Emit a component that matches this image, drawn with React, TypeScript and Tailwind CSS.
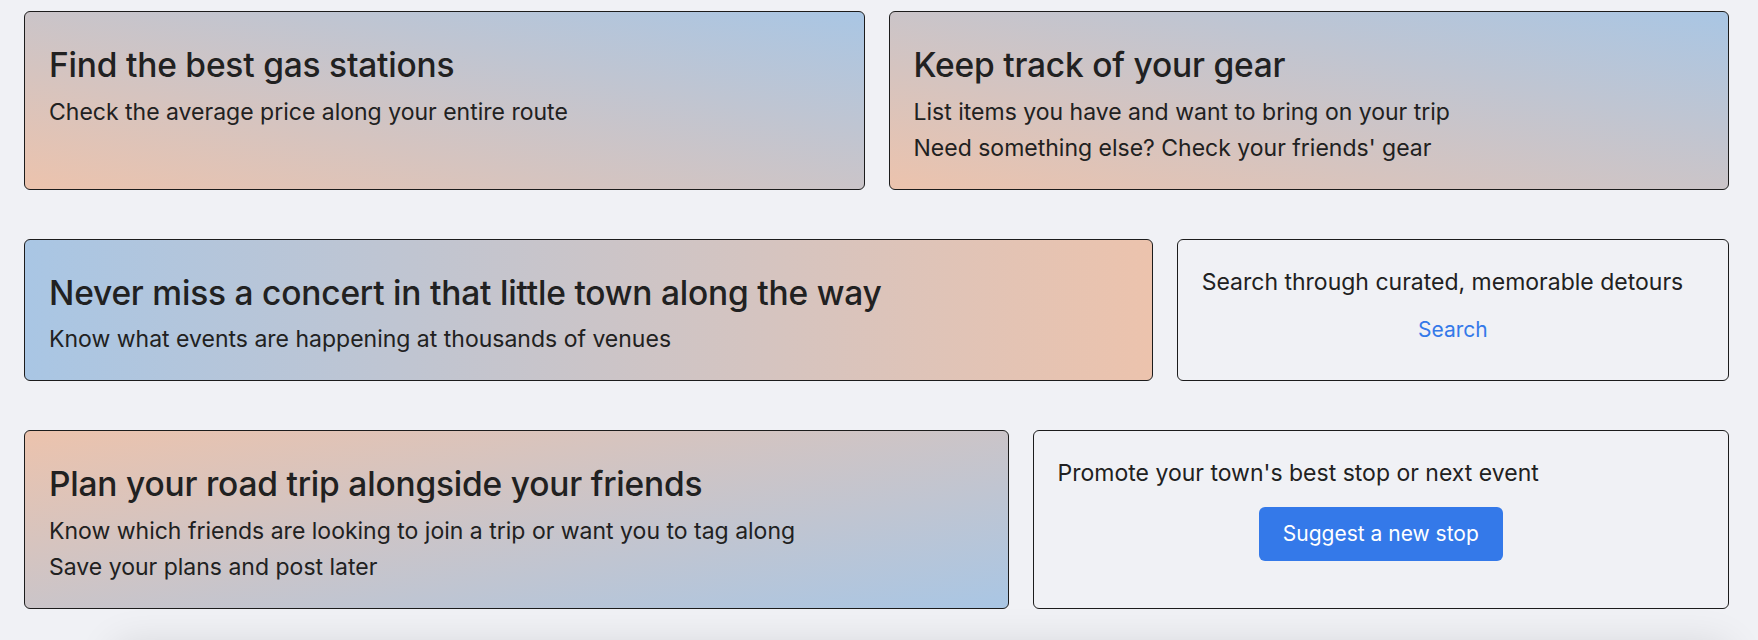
import React from "react";

const font = { fontFamily: "Inter, 'Noto Sans', sans-serif" };

type FeatureProps = {
  title: string;
  lines: string[];
  bg: string;
  span: string;
};

const FeatureCard = ({ title, lines, bg, span }: FeatureProps) => {
  return (
    <div
      className={`${span} ${bg} rounded-md border border-[#1c1c1c] px-6 pt-[34px] pb-[23px] text-[#212121]`}
    >
      <h2 className="mb-2 text-[33.5px] font-medium leading-[39.5px] tracking-[-0.2px]">
        {title}
      </h2>
      {lines.map((l) => (
        <p key={l} className="text-[23px] leading-[36px]">
          {l}
        </p>
      ))}
    </div>
  );
};

const App = () => {
  return (
    <div
      className="h-[640px] w-full overflow-hidden bg-[#f0f1f5] pt-[11px] pl-6 pr-[29px]"
      style={font}
    >
      <div className="flex flex-col gap-[49px]">
        <div className="grid grid-cols-12 gap-x-6">
          <FeatureCard
            span="col-span-6"
            bg="bg-[linear-gradient(to_top_right,#ecc3ad,#a9c6e4)]"
            title="Find the best gas stations"
            lines={["Check the average price along your entire route"]}
          />
          <FeatureCard
            span="col-span-6"
            bg="bg-[linear-gradient(to_top_right,#ecc3ad,#a9c6e4)]"
            title="Keep track of your gear"
            lines={[
              "List items you have and want to bring on your trip",
              "Need something else? Check your friends' gear",
            ]}
          />
        </div>

        <div className="grid grid-cols-12 gap-x-6">
          <FeatureCard
            span="col-span-8"
            bg="bg-[linear-gradient(to_right,#a9c6e4,#ecc3ad)]"
            title="Never miss a concert in that little town along the way"
            lines={["Know what events are happening at thousands of venues"]}
          />
          <div className="col-span-4 rounded-md border border-[#1c1c1c] p-6 text-[#212121]">
            <p className="text-[23px] leading-[36px]">
              Search through curated, memorable detours
            </p>
            <div className="mt-[15px] text-center">
              <a href="#" className="text-[21px] leading-[30px] text-[#3479e9]">
                Search
              </a>
            </div>
          </div>
        </div>

        <div className="grid grid-cols-12 gap-x-6">
          <FeatureCard
            span="col-span-7"
            bg="bg-[linear-gradient(to_bottom_right,#ecc3ad,#a9c6e4)]"
            title="Plan your road trip alongside your friends"
            lines={[
              "Know which friends are looking to join a trip or want you to tag along",
              "Save your plans and post later",
            ]}
          />
          <div className="col-span-5 rounded-md border border-[#1c1c1c] p-6 text-[#212121]">
            <p className="text-[23px] leading-[36px]">
              Promote your town's best stop or next event
            </p>
            <div className="mt-4 flex justify-center">
              <button
                type="button"
                className="rounded-md bg-[#3479e9] px-6 py-3 text-[21px] leading-[30px] text-white"
              >
                Suggest a new stop
              </button>
            </div>
          </div>
        </div>
      </div>

      {/* next section peeking in from below */}
      <div className="mt-[36px] ml-[90px] h-[120px] rounded-xl bg-[#f0f1f5] shadow-[0_0_40px_rgba(0,0,0,0.12)]" />
    </div>
  );
};

export default App;
